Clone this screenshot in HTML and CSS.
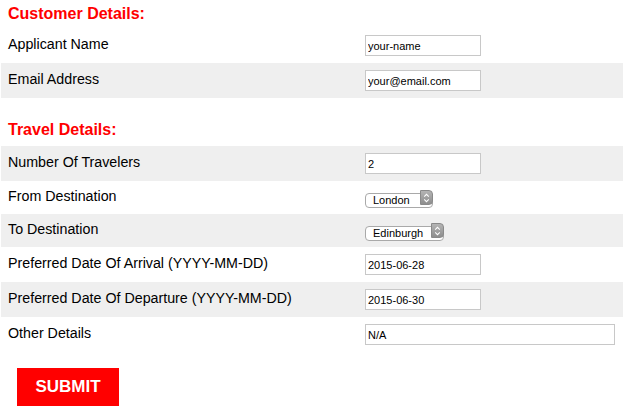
FILE: index.html
```html
<!DOCTYPE html>
<html>
<head>
<meta charset="utf-8">
<title>Travel Form</title>
<link rel="stylesheet" href="styles.css">
</head>
<body>
<form class="form">
  <h2 class="section-title">Customer Details:</h2>
  <div class="row">
    <label class="label">Applicant Name</label>
    <div class="field"><input class="text" type="text" value="your-name"></div>
  </div>
  <div class="row alt">
    <label class="label">Email Address</label>
    <div class="field"><input class="text" type="text" value="your@email.com"></div>
  </div>

  <h2 class="section-title second">Travel Details:</h2>
  <div class="row alt">
    <label class="label">Number Of Travelers</label>
    <div class="field"><input class="text" type="text" value="2"></div>
  </div>
  <div class="row short">
    <label class="label">From Destination</label>
    <div class="field">
      <span class="select select-london">
        <select class="select-input"><option>London</option></select>
        <span class="select-arrow"><svg width="12" height="14" viewBox="0 0 12 14"><path d="M3.5 5.5 L6 3 L8.5 5.5 M3.5 8.5 L6 11 L8.5 8.5" fill="none" stroke="#fff" stroke-width="1.1"/></svg></span>
      </span>
    </div>
  </div>
  <div class="row alt short">
    <label class="label">To Destination</label>
    <div class="field">
      <span class="select select-edin">
        <select class="select-input"><option>Edinburgh</option></select>
        <span class="select-arrow"><svg width="12" height="14" viewBox="0 0 12 14"><path d="M3.5 5.5 L6 3 L8.5 5.5 M3.5 8.5 L6 11 L8.5 8.5" fill="none" stroke="#fff" stroke-width="1.1"/></svg></span>
      </span>
    </div>
  </div>
  <div class="row">
    <label class="label">Preferred Date Of Arrival (YYYY-MM-DD)</label>
    <div class="field"><input class="text" type="text" value="2015-06-28"></div>
  </div>
  <div class="row alt">
    <label class="label">Preferred Date Of Departure (YYYY-MM-DD)</label>
    <div class="field"><input class="text" type="text" value="2015-06-30"></div>
  </div>
  <div class="row">
    <label class="label">Other Details</label>
    <div class="field"><input class="text wide" type="text" value="N/A"></div>
  </div>

  <button class="submit" type="button">SUBMIT</button>
</form>
</body>
</html>
```

FILE: styles.css
```css
* { box-sizing: border-box; }
html, body { margin: 0; padding: 0; background: #fff; }
body {
  font-family: "Liberation Sans", Arial, Helvetica, sans-serif;
  color: #000;
}
.form {
  margin: 0 0 0 1px;
  display: flex;
  flex-direction: column;
  align-items: stretch;
}
.section-title {
  margin: 0;
  padding-left: 7px;
  height: 28px;
  line-height: 28px;
  font-size: 16px;
  font-weight: bold;
  color: #ff0000;
}
.section-title.second {
  margin-top: 18px;
  margin-bottom: 2px;
}
.row {
  display: flex;
  align-items: center;
  height: 35px;
  background: #fff;
}
.row.short { height: 33px; }
.row.alt { background: #efefef; }
.label {
  width: 364px;
  padding-left: 7px;
  padding-bottom: 4px;
  font-size: 14.25px;
  line-height: 16px;
}
.field {
  flex: 1;
  display: flex;
  align-items: center;
}
.text {
  width: 116px;
  height: 21px;
  border: 1px solid #c8c8c8;
  background: #fff;
  padding: 0 2px;
  font-family: "Liberation Sans", Arial, Helvetica, sans-serif;
  font-size: 11px;
  color: #000;
  outline: none;
  margin: 0;
}
.text.wide { width: 250px; }
.select {
  position: relative;
  display: inline-block;
  height: 15px;
}
.select-london { width: 68px; }
.select-edin { width: 79px; }
.select-input {
  -webkit-appearance: none;
  appearance: none;
  width: 100%;
  height: 15px;
  margin: 0;
  border: 1px solid #a9a9a9;
  border-radius: 4px;
  background: #fff;
  padding: 0 0 1px 7px;
  font-family: "Liberation Sans", Arial, Helvetica, sans-serif;
  font-size: 11px;
  line-height: 12px;
  color: #000;
  outline: none;
}
.select-arrow {
  position: absolute;
  right: 0;
  top: 0;
  width: 13px;
  height: 15px;
  border-radius: 0 4px 4px 0;
  background: linear-gradient(#b4b4b4, #8e8e8e);
  border: 1px solid #8a8a8a;
  display: flex;
  align-items: center;
  justify-content: center;
}
.select-arrow svg { display: block; }
.submit {
  align-self: flex-start;
  margin: 16px 0 0 16px;
  width: 102px;
  height: 38px;
  border: none;
  background: #ff0000;
  color: #fff;
  font-family: "Liberation Sans", Arial, Helvetica, sans-serif;
  font-size: 17px;
  font-weight: bold;
  padding: 0;
  cursor: pointer;
}
```
